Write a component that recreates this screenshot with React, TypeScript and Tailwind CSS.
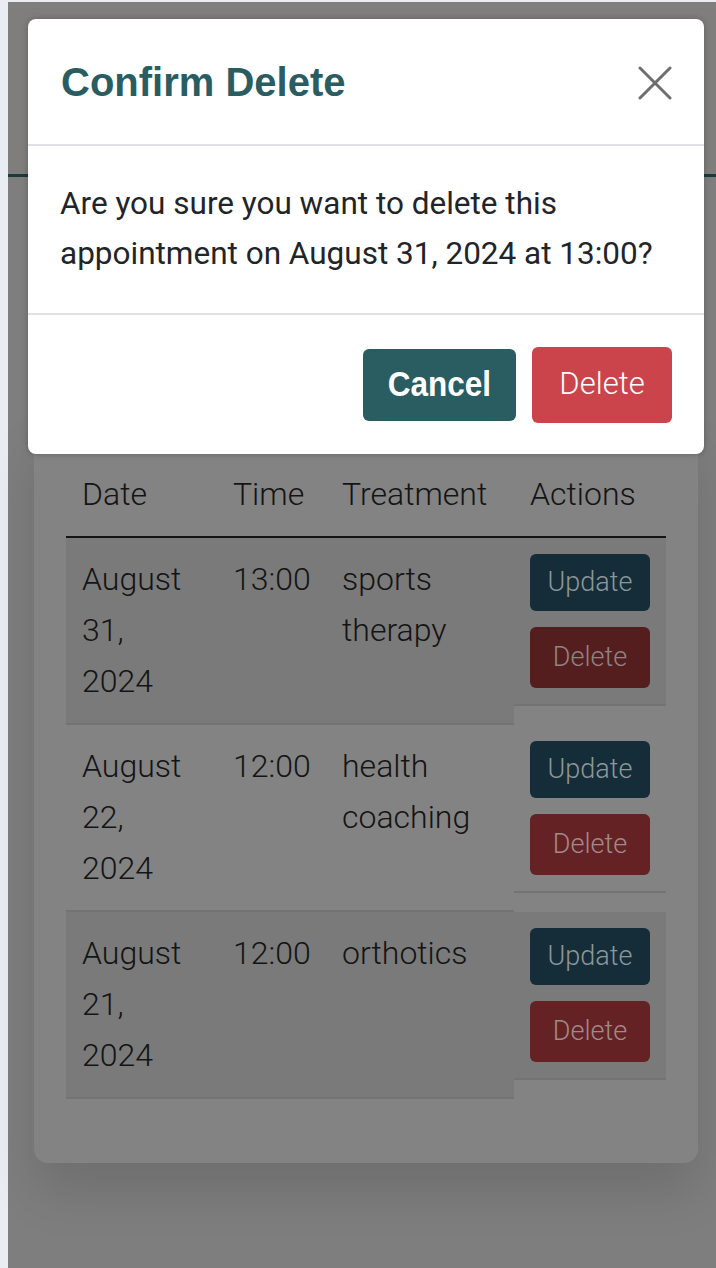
import React from "react";

const rows = [
  { date: ["August", "31,", "2024"], time: "13:00", treat: ["sports", "therapy"], striped: true, del: "bg-[#551e1e]", delText: "text-[#8e8484]" },
  { date: ["August", "22,", "2024"], time: "12:00", treat: ["health", "coaching"], striped: false, del: "bg-[#642225]", delText: "text-[#a08a8b]" },
  { date: ["August", "21,", "2024"], time: "12:00", treat: ["orthotics"], striped: true, del: "bg-[#642225]", delText: "text-[#a08a8b]" },
];

export default function App() {
  return (
    <div
      className="relative w-[716px] h-[1268px] overflow-hidden bg-[#e9ecf3] pt-[2px] pl-[8px]"
      style={{ fontFamily: "Roboto, 'Liberation Sans', sans-serif" }}
    >
      <div className="h-full bg-[#7e7e7e] flex flex-col">
        <div className="h-[175px] shrink-0 border-b-[3px] border-[#1b3a3a] bg-[#7f7e7c]" />
        <div className="mt-[244px] ml-[26px] mr-[18px] rounded-[14px] bg-[#838383] pt-[32px] px-[32px] pb-[64px] shadow-[0_30px_50px_rgba(0,0,0,0.12)]">
          <div className="text-[#141414] font-light text-[32px] leading-[51px]">
            <div className="grid grid-cols-[151px_109px_188px_152px] border-b-2 border-[#141414]">
              <div className="pl-[16px] pt-[16px] pb-[16px]">Date</div>
              <div className="pl-[16px] pt-[16px] pb-[16px]">Time</div>
              <div className="pl-[16px] pt-[16px] pb-[16px]">Treatment</div>
              <div className="pl-[16px] pt-[16px] pb-[16px]">Actions</div>
            </div>
            {rows.map((r, i) => {
              const bg = r.striped ? "bg-[#7a7a7a]" : "bg-[#838383]";
              return (
                <div key={i} className="grid grid-cols-[151px_109px_188px_152px] items-start">
                  <div className={`self-stretch ${bg} border-b-2 border-[#737373] px-[16px] pt-[16px] pb-[16px]`}>
                    {r.date.map((d, j) => (
                      <div key={j}>{d}</div>
                    ))}
                  </div>
                  <div className={`self-stretch ${bg} border-b-2 border-[#737373] px-[16px] pt-[16px] pb-[16px]`}>
                    {r.time}
                  </div>
                  <div className={`self-stretch ${bg} border-b-2 border-[#737373] px-[16px] pt-[16px] pb-[16px]`}>
                    {r.treat.map((d, j) => (
                      <div key={j}>{d}</div>
                    ))}
                  </div>
                  <div className={`${bg} border-b-2 border-[#737373] px-[16px] pt-[16px] pb-[16px] flex flex-col gap-[16px]`}>
                    <div className="w-[120px] h-[57px] rounded-[6px] bg-[#142d39] text-[#8e9699] text-[27px] font-light flex items-center justify-center">
                      Update
                    </div>
                    <div className={`w-[120px] h-[61px] rounded-[6px] ${r.del} ${r.delText} text-[27px] font-light flex items-center justify-center`}>
                      Delete
                    </div>
                  </div>
                </div>
              );
            })}
          </div>
        </div>
      </div>

      <div className="absolute left-[28px] top-[19px] w-[676px] bg-white rounded-[8px] shadow-[0_0_6px_rgba(0,0,0,0.25)]">
        <div className="h-[127px] flex items-center justify-between pl-[33px] pr-[32px] border-b-2 border-[#dee2e6]">
          <h2
            className="text-[40px] font-bold text-[#2a5d62] leading-none"
            style={{ fontFamily: "'Liberation Sans', Arial, sans-serif" }}
          >
            Confirm Delete
          </h2>
          <svg width="34" height="34" viewBox="0 0 34 34" className="mt-[2px]">
            <line x1="2" y1="2" x2="32" y2="32" stroke="#6e6e6e" strokeWidth="3" strokeLinecap="round" />
            <line x1="32" y1="2" x2="2" y2="32" stroke="#6e6e6e" strokeWidth="3" strokeLinecap="round" />
          </svg>
        </div>
        <div className="pt-[33px] pb-[34px] pl-[32px] pr-[32px] text-[31.5px] leading-[50px] text-[#212529]">
          Are you sure you want to delete this appointment on August 31, 2024 at 13:00?
        </div>
        <div className="h-[141px] border-t-2 border-[#dee2e6] flex items-center justify-end gap-[16px] pr-[32px]">
          <button
            className="w-[153px] h-[72px] rounded-[6px] bg-[#2a5d62] text-white text-[35px] font-bold flex items-center justify-center"
            style={{ fontFamily: "'Liberation Sans', Arial, sans-serif" }}
          >
            <span className="inline-block scale-x-[0.9]">Cancel</span>
          </button>
          <button className="w-[140px] h-[76px] rounded-[6px] bg-[#cc444b] text-white text-[31px] font-light">
            Delete
          </button>
        </div>
      </div>
    </div>
  );
}
